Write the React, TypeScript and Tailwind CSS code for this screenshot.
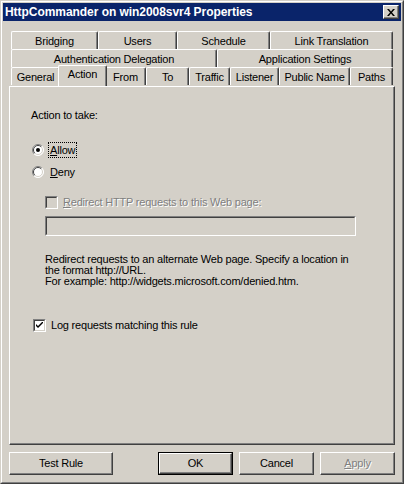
import React from "react";

const tabRows = [
  [
    { label: "Bridging", cls: "w-[87px]" },
    { label: "Users", cls: "w-[79px]" },
    { label: "Schedule", cls: "w-[93px]" },
    { label: "Link Translation", cls: "w-[123px]" },
  ],
  [
    { label: "Authentication Delegation", cls: "w-[206px]" },
    { label: "Application Settings", cls: "w-[176px]" },
  ],
  [
    { label: "General", cls: "w-[49px]" },
    { label: "Action", cls: "w-[49px]", selected: true },
    { label: "From", cls: "w-[41px]" },
    { label: "To", cls: "w-[43px]" },
    { label: "Traffic", cls: "w-[41px]" },
    { label: "Listener", cls: "w-[49px]" },
    { label: "Public Name", cls: "w-[71px]" },
    { label: "Paths", cls: "w-[43px]" },
  ],
];

// raised 3d edge used by tabs & buttons
const raised = "border-t border-l border-white border-r border-b border-r-[#404040] border-b-[#404040] shadow-[inset_-1px_-1px_#808080]";
const disabledText = "text-[#808080] [text-shadow:1px_1px_0_#fff]";

function Tab({ label, cls, selected }: { label: string; cls: string; selected?: boolean }) {
  return (
    <div
      className={`${cls} flex items-center justify-center border-t border-l border-white border-r border-r-[#404040] shadow-[inset_-1px_0_#808080] rounded-t-[2px] bg-[#d4d0c8] ${
        selected ? "h-[21px] -mx-[2px] -mt-[2px] pb-[3px] relative z-10" : "h-[18px] pt-[1px]"
      }`}
    >
      {label}
    </div>
  );
}

function Radio({ checked }: { checked?: boolean }) {
  return (
    <svg width="12" height="12" viewBox="0 0 12 12" className="shrink-0">
      <circle cx="6" cy="6" r="5.5" fill="#fff" />
      <path d="M2.1 9.9 A5.5 5.5 0 0 1 9.9 2.1" stroke="#808080" fill="none" />
      <path d="M9.9 2.1 A5.5 5.5 0 0 1 2.1 9.9" stroke="#fff" fill="none" />
      <path d="M2.8 9.2 A4.5 4.5 0 0 1 9.2 2.8" stroke="#404040" fill="none" />
      <path d="M9.2 2.8 A4.5 4.5 0 0 1 2.8 9.2" stroke="#d4d0c8" fill="none" />
      {checked && <circle cx="6" cy="6" r="2" fill="#000" />}
    </svg>
  );
}

function Check({ checked, disabled }: { checked?: boolean; disabled?: boolean }) {
  return (
    <div className="w-[13px] h-[13px] shrink-0 border-t border-l border-[#808080] border-r border-b border-r-white border-b-white">
      <div
        className={`w-full h-full border-t border-l border-[#404040] border-r border-b border-r-[#d4d0c8] border-b-[#d4d0c8] flex items-center justify-center ${
          disabled ? "bg-[#d4d0c8]" : "bg-white"
        }`}
      >
        {checked && (
          <svg width="7" height="7" viewBox="0 0 7 7">
            <path d="M0 2 L0 4 L2 6 L7 1 L7 -1 L2 4 Z" fill="#000" />
          </svg>
        )}
      </div>
    </div>
  );
}

function Button({ children, cls, isDefault }: { children: React.ReactNode; cls: string; isDefault?: boolean }) {
  if (isDefault) {
    return (
      <div className={`${cls} h-[23px] border border-black`}>
        <div className={`w-full h-full ${raised} flex items-center justify-center`}>{children}</div>
      </div>
    );
  }
  return <div className={`${cls} h-[23px] ${raised} flex items-center justify-center`}>{children}</div>;
}

export default function App() {
  return (
    <div className="w-[404px] h-[484px] bg-[#d4d0c8] font-['Liberation_Sans',Arial,sans-serif] text-[11px] leading-[13px] text-black select-none border-t border-l border-[#d4d0c8] border-r border-b border-r-[#404040] border-b-[#404040]">
      <div className="h-full border-t border-l border-white border-r border-b border-r-[#808080] border-b-[#808080] p-[1px] flex flex-col">
        {/* title bar */}
        <div className="h-[18px] bg-[#0a246a] flex items-center justify-between pl-[2px] pr-[2px]">
          <span className="text-white font-bold text-[12px] tracking-[-0.05px]">HttpCommander on win2008svr4 Properties</span>
          <div className={`w-[16px] h-[14px] bg-[#d4d0c8] ${raised} flex items-center justify-center`}>
            <svg width="8" height="7" viewBox="0 0 8 7">
              <path d="M0 0h2l2 2.5 2-2.5h2l-3 3.5 3 3.5h-2l-2-2.5-2 2.5h-2l3-3.5z" fill="#000" />
            </svg>
          </div>
        </div>

        {/* tabs */}
        <div className="mt-[10px] pl-[6px] flex flex-col tracking-[-0.2px]">
          <div className="pl-[2px] flex flex-col">
            {tabRows.map((row, i) => (
              <div key={i} className="flex">
                {row.map((t) => (
                  <Tab key={t.label} {...t} />
                ))}
              </div>
            ))}
          </div>

          {/* panel */}
          <div className="w-[386px] h-[359px] border-t border-l border-white border-r border-b border-r-[#404040] border-b-[#404040] shadow-[inset_-1px_-1px_#808080] pl-[21px] flex flex-col">
            <div className="mt-[22px]">Action to take:</div>

            <div className="mt-[20px] h-[16px] flex items-center">
              <span className="ml-[1px]"><Radio checked /></span>
              <span className="ml-[4px] border border-dotted border-black px-[1px] h-[16px] flex items-center">
                <span className="underline underline-offset-1">A</span>llow
              </span>
            </div>
            <div className="mt-[6px] h-[16px] flex items-center">
              <span className="ml-[1px]"><Radio /></span>
              <span className="ml-[6px]">
                <span className="underline underline-offset-1">D</span>eny
              </span>
            </div>

            <div className="mt-[14px] ml-[14px] h-[16px] flex items-center">
              <Check disabled />
              <span className={`ml-[5px] ${disabledText}`}>
                <span className="underline underline-offset-1">R</span>edirect HTTP requests to this Web page:
              </span>
            </div>

            <div className="mt-[6px] ml-[14px] w-[311px] h-[20px] border-t border-l border-[#808080] border-r border-b border-r-white border-b-white">
              <div className="w-full h-full border-t border-l border-[#404040] border-r border-b border-r-[#d4d0c8] border-b-[#d4d0c8] bg-[#d4d0c8]" />
            </div>

            <div className="mt-[18px] ml-[14px] leading-[11px]">
              <div>Redirect requests to an alternate Web page. Specify a location in</div>
              <div>the format http://URL.</div>
              <div>For example: http://widgets.microsoft.com/denied.htm.</div>
            </div>

            <div className="mt-[30px] ml-[2px] h-[16px] flex items-center">
              <Check checked />
              <span className="ml-[5px]">
                Lo<span className="underline underline-offset-1">g</span> requests matching this rule
              </span>
            </div>
          </div>

          {/* buttons */}
          <div className="mt-[7px] flex">
            <Button cls="w-[104px]">Test Rule</Button>
            <div className="ml-[45px] flex gap-[6px]">
              <Button cls="w-[75px]" isDefault>
                OK
              </Button>
              <Button cls="w-[75px]">Cancel</Button>
              <Button cls="w-[75px]">
                <span className={disabledText}>
                  <span className="underline underline-offset-1">A</span>pply
                </span>
              </Button>
            </div>
          </div>
        </div>
      </div>
    </div>
  );
}
